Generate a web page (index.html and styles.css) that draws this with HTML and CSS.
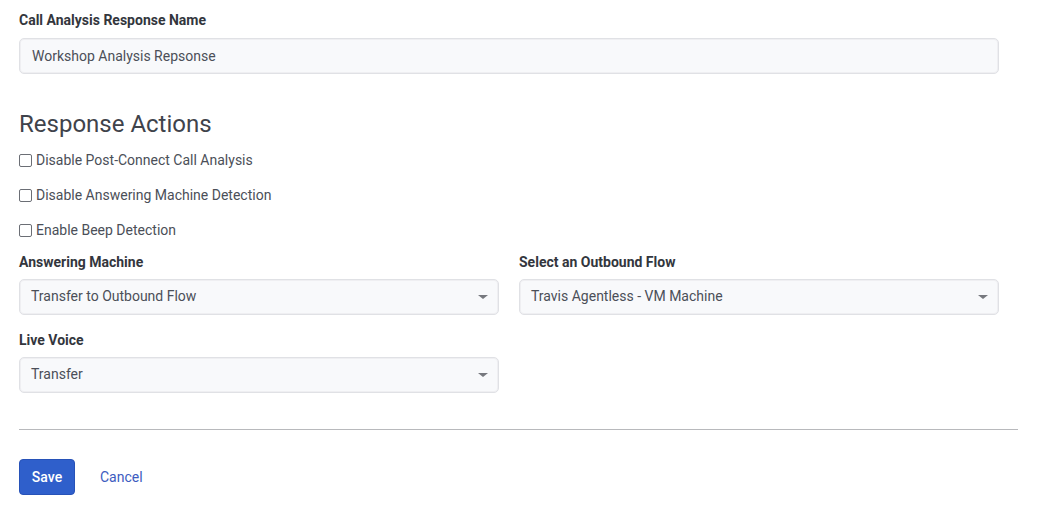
FILE: index.html
```html
<!DOCTYPE html>
<html>
<head>
<meta charset="utf-8">
<link rel="stylesheet" href="styles.css">
</head>
<body>
<main class="page">
  <div class="field">
    <label class="field-label">Call Analysis Response Name</label>
    <div class="input">Workshop Analysis Repsonse</div>
  </div>

  <h2 class="section-title">Response Actions</h2>

  <div class="checks">
    <label class="check"><span class="box"></span>Disable Post-Connect Call Analysis</label>
    <label class="check"><span class="box"></span>Disable Answering Machine Detection</label>
    <label class="check"><span class="box"></span>Enable Beep Detection</label>
  </div>

  <div class="grid">
    <div class="field">
      <label class="field-label">Answering Machine</label>
      <div class="select"><span>Transfer to Outbound Flow</span><span class="caret"></span></div>
    </div>
    <div class="field">
      <label class="field-label">Select an Outbound Flow</label>
      <div class="select"><span>Travis Agentless - VM Machine</span><span class="caret"></span></div>
    </div>
    <div class="field">
      <label class="field-label">Live Voice</label>
      <div class="select"><span>Transfer</span><span class="caret"></span></div>
    </div>
  </div>

  <hr class="divider">

  <div class="actions">
    <button class="btn-primary">Save</button>
    <a class="btn-link">Cancel</a>
  </div>
</main>
</body>
</html>
```
FILE: styles.css
```css
* { box-sizing: border-box; }
html, body { margin: 0; background: #fff; }
body {
  font-family: Roboto, "Liberation Sans", sans-serif;
  color: #4b4f58;
  font-size: 14px;
}
.page {
  padding: 10px 0 0 19px;
  width: 1018px;
}
.field { display: flex; flex-direction: column; }
.field-label {
  font-weight: 700;
  font-size: 14px;
  line-height: 20px;
  color: #33363d;
  margin-bottom: 8px;
}
.input, .select {
  height: 36px;
  background: #f8f9fb;
  border: 1px solid #e0e1e5;
  border-radius: 5px;
  box-shadow: 0 0 0 1px #efeff2 inset;
  display: flex;
  align-items: center;
  font-size: 14px;
  color: #4b4f58;
}
.input { width: 980px; padding-left: 12px; }
.select { padding: 0 10px 3px 11px; justify-content: space-between; }
.caret {
  width: 0; height: 0;
  border-left: 5px solid transparent;
  border-right: 5px solid transparent;
  border-top: 4px solid #76787e;
  margin-top: 3px;
}
.section-title {
  margin: 36px 0 0;
  font-size: 24px;
  line-height: 28px;
  font-weight: 400;
  color: #3f434b;
}
.checks {
  margin-top: 12px;
  display: flex;
  flex-direction: column;
  gap: 15px;
}
.check {
  display: flex;
  align-items: center;
  line-height: 20px;
  font-size: 14px;
  color: #4b4f58;
}
.box {
  width: 13px; height: 13px;
  border: 1px solid #6b6e75;
  border-radius: 2px;
  margin-right: 4px;
  background: #fff;
}
.grid {
  margin-top: 12px;
  display: grid;
  grid-template-columns: 480px 480px;
  column-gap: 20px;
  row-gap: 15px;
}
.grid .field-label { margin-bottom: 7px; }
.divider {
  margin: 36px 0 0;
  border: 0;
  border-top: 1px solid #b8b9bc;
  width: 999px;
}
.actions {
  margin-top: 29px;
  display: flex;
  align-items: center;
  gap: 25px;
}
.btn-primary {
  height: 36px;
  width: 56px;
  background: #2f5fcb;
  color: #fff;
  border: 1px solid #2752b8;
  border-radius: 4px;
  font-family: Roboto, "Liberation Sans", sans-serif;
  font-size: 14px;
  font-weight: 500;
  padding: 0;
}
.btn-link {
  color: #3d5cc0;
  font-size: 14px;
}
```
